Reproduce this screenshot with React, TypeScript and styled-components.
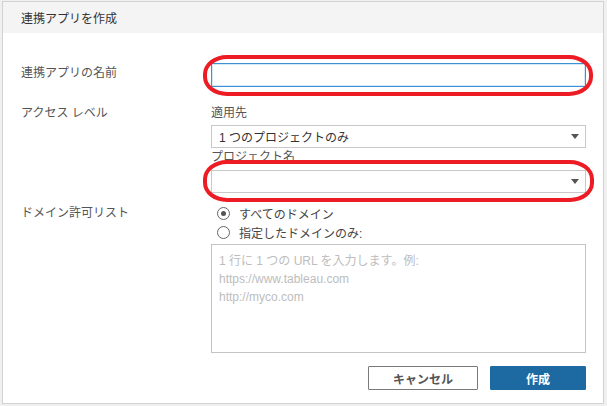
import styled, { createGlobalStyle } from "styled-components";

const GlobalStyle = createGlobalStyle`
    body {
        margin: 0;
        background-color: #f0f0f0;
        font-family: "Liberation Sans", "Noto Sans CJK JP", sans-serif;
    }
`;

const Dialog = styled.div`
    box-sizing: border-box;
    margin: 1px 0 0 2px;
    width: 602px;
    height: 403px;
    border: 1px solid #d2d2d2;
    background-color: #ffffff;
    display: flex;
    flex-direction: column;
`;
const Header = styled.div`
    height: 31px;
    background-color: #f4f4f4;
    display: flex;
    align-items: center;
    padding-left: 18px;
    font-size: 12px;
    color: #333;
`;
const Body = styled.div`
    display: flex;
    flex-direction: column;
    padding: 30px 17px 0 18px;
`;
const Row = styled.div<{ $top?: number }>`
    display: grid;
    grid-template-columns: 190px 375px;
    align-items: start;
    margin-top: ${p => p.$top ?? 0}px;
`;
const Label = styled.div<{ $lh?: number }>`
    font-size: 12px;
    line-height: ${p => p.$lh ?? 18}px;
    color: #555;
`;
const Field = styled.div`
    display: flex;
    flex-direction: column;
`;
const SubLabel = styled.div<{ $bottom?: number }>`
    font-size: 12px;
    line-height: 18px;
    color: #555;
    margin-bottom: ${p => p.$bottom ?? 0}px;
`;
const Marked = styled.div`
    position: relative;
`;
const RedMark = styled.div<{ $t: number; $b: number; $l: number; $r: number }>`
    position: absolute;
    top: ${p => p.$t}px;
    bottom: ${p => p.$b}px;
    left: ${p => p.$l}px;
    right: ${p => p.$r}px;
    border: 4px solid #ed1c24;
    border-radius: 24px / 19px;
    pointer-events: none;
`;
const TextInput = styled.input`
    box-sizing: border-box;
    display: block;
    width: 100%;
    height: 24px;
    border: 1px solid #3e92d4;
    box-shadow: inset 0 0 0 1px #d4e8f7;
    outline: none;
    padding: 0 6px;
    font: inherit;
    font-size: 12px;
`;
const SelectBox = styled.div`
    box-sizing: border-box;
    height: 23px;
    border: 1px solid #c8c8c8;
    display: flex;
    align-items: center;
    justify-content: space-between;
    padding: 0 6px 0 7px;
    font-size: 12px;
    color: #333;
`;
const Arrow = styled.span`
    width: 0;
    height: 0;
    border-left: 4px solid transparent;
    border-right: 4px solid transparent;
    border-top: 5px solid #555;
`;
const RadioRow = styled.label`
    display: flex;
    align-items: center;
    gap: 9px;
    height: 19px;
    padding-left: 6px;
    font-size: 12px;
    color: #444;
`;
const RadioDot = styled.span<{ $checked?: boolean }>`
    box-sizing: border-box;
    width: 13px;
    height: 13px;
    border-radius: 50%;
    border: 1px solid #666;
    display: flex;
    align-items: center;
    justify-content: center;
    &::after {
        content: "";
        width: 5px;
        height: 5px;
        border-radius: 50%;
        background-color: ${p => (p.$checked ? "#555" : "transparent")};
    }
`;
const UrlArea = styled.textarea`
    box-sizing: border-box;
    display: block;
    width: 100%;
    height: 109px;
    margin-top: 2px;
    border: 1px solid #c4c4c4;
    padding: 7px 7px;
    resize: none;
    outline: none;
    font-family: "Liberation Sans", "Noto Sans CJK JP", sans-serif;
    font-size: 12px;
    line-height: 18px;
    &::placeholder {
        color: #bdbdbd;
    }
`;
const Footer = styled.div`
    display: flex;
    justify-content: flex-end;
    gap: 12px;
    margin-top: 13px;
`;
const Button = styled.button<{ $primary?: boolean }>`
    box-sizing: border-box;
    height: 24px;
    width: ${p => (p.$primary ? 96 : 110)}px;
    border: 1px solid ${p => (p.$primary ? "#1d6aa3" : "#7a7a7a")};
    border-radius: 1px;
    background-color: ${p => (p.$primary ? "#1d6aa3" : "#ffffff")};
    color: ${p => (p.$primary ? "#ffffff" : "#555")};
    font-family: "Liberation Sans", "Noto Sans CJK JP", sans-serif;
    font-size: 12px;
    font-weight: bold;
    padding: 0;
`;

export default function App() {
    return (
        <>
            <GlobalStyle />
            <Dialog>
                <Header>連携アプリを作成</Header>
                <Body>
                    <Row>
                        <Label $lh={20}>連携アプリの名前</Label>
                        <Marked>
                            <TextInput />
                            <RedMark $t={-8} $b={-9} $l={-8} $r={-7} />
                        </Marked>
                    </Row>
                    <Row $top={17}>
                        <Label>アクセス レベル</Label>
                        <Field>
                            <SubLabel $bottom={3}>適用先</SubLabel>
                            <SelectBox>
                                <span>1 つのプロジェクトのみ</span>
                                <Arrow />
                            </SelectBox>
                            <SubLabel $bottom={4}>プロジェクト名</SubLabel>
                            <Marked>
                                <SelectBox>
                                    <span />
                                    <Arrow />
                                </SelectBox>
                                <RedMark $t={-10} $b={-9} $l={-8} $r={-8} />
                            </Marked>
                        </Field>
                    </Row>
                    <Row $top={11}>
                        <Label>ドメイン許可リスト</Label>
                        <Field>
                            <RadioRow>
                                <RadioDot $checked />
                                すべてのドメイン
                            </RadioRow>
                            <RadioRow>
                                <RadioDot />
                                指定したドメインのみ:
                            </RadioRow>
                            <UrlArea placeholder={"1 行に 1 つの URL を入力します。例:\nhttps://www.tableau.com\nhttp://myco.com"} />
                        </Field>
                    </Row>
                    <Footer>
                        <Button>キャンセル</Button>
                        <Button $primary>作成</Button>
                    </Footer>
                </Body>
            </Dialog>
        </>
    );
}
